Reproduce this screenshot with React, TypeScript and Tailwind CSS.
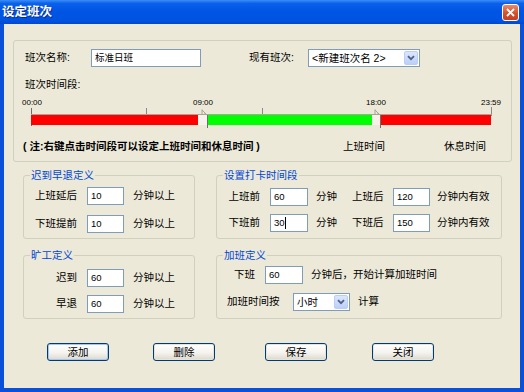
import React from 'react';

type TextBoxProps = { value: string; w: string; caret?: boolean };

function TextBox({ value, w, caret = false }: TextBoxProps) {
  return (
    <div className={`${w} h-[18px] shrink-0 flex items-center bg-white border border-[#7F9DB9] pl-[3px] text-[9.5px] leading-none`}>
      <span>{value}</span>
      {caret && <span className="w-px h-[12px] bg-black" />}
    </div>
  );
}

function Combo({ value, w }: { value: string; w: string }) {
  return (
    <div className={`${w} h-[18px] shrink-0 flex items-center justify-between bg-white border border-[#7F9DB9] pl-[3px] pr-px`}>
      <span className="leading-none">{value}</span>
      <div className="w-[14px] h-[14px] rounded-[2px] border border-[#B9CDF6] bg-[linear-gradient(180deg,#DCE6FD,#BCCFF8)] flex items-center justify-center">
        <svg width="8" height="6" viewBox="0 0 8 6">
          <path d="M1 1.2 L4 4.2 L7 1.2" fill="none" stroke="#4D6185" strokeWidth="1.8" />
        </svg>
      </div>
    </div>
  );
}

function GroupBox({ title, className, children }: { title: string; className: string; children: React.ReactNode }) {
  return (
    <div className={`relative shrink-0 border border-[#D0D0BF] rounded-[3px] ${className}`}>
      <span className="absolute -top-[8px] left-[6px] px-px bg-[#ECE9D8] text-[#0046D5] leading-[14px]">{title}</span>
      {children}
    </div>
  );
}

function XpButton({ label, className, primary = false }: { label: string; className: string; primary?: boolean }) {
  return (
    <button
      className={`w-[62px] h-[18px] shrink-0 rounded-[3px] border border-[#003C74] bg-[linear-gradient(180deg,#FFFFFF_0%,#F4F3EE_55%,#DCD8CC_100%)] leading-none ${
        primary ? 'shadow-[inset_0_0_0_1px_#A8C4F0]' : 'shadow-[inset_0_0_0_1px_#E6E4DA]'
      } ${className}`}
    >
      {label}
    </button>
  );
}

// small drag handle drawn at a segment boundary
function Handle({ left }: { left: string }) {
  return (
    <svg className={`absolute top-[11px] ${left}`} width="7" height="8" viewBox="0 0 7 8">
      <path d="M1 0.5 L1 6 M1 1 L5 5 L3 5" fill="none" stroke="#A8A496" strokeWidth="1" />
    </svg>
  );
}

function Timeline() {
  return (
    <div className="relative h-[30px] mt-[7px] text-[8px] leading-[10px]">
      {/* labels */}
      <span className="absolute top-0 left-[18px] -translate-x-1/2">00:00</span>
      <span className="absolute top-0 left-[189px] -translate-x-1/2">09:00</span>
      <span className="absolute top-0 left-[362px] -translate-x-1/2">18:00</span>
      <span className="absolute top-0 left-[477px] -translate-x-1/2">23:59</span>

      {/* ticks */}
      <div className="absolute left-[17px] top-[10px] w-px h-[18px] bg-[#6E6E6E]" />
      <div className="absolute left-[132px] top-[10px] w-px h-[6px] bg-[#8A8A8A]" />
      <div className="absolute left-[248px] top-[10px] w-px h-[6px] bg-[#8A8A8A]" />
      <div className="absolute left-[477px] top-[9px] w-px h-[9px] bg-[#8A8A8A]" />

      {/* track */}
      <div className="absolute left-[17px] top-[16px] w-[461px] h-px bg-[#A9A596]" />
      <div className="absolute left-[17px] top-[17px] w-[167px] h-[10px] bg-[#FF0000]" />
      <div className="absolute left-[184px] top-[17px] w-[10px] h-[10px] bg-[#F4F2EA]" />
      <div className="absolute left-[194px] top-[17px] w-[164px] h-[10px] bg-[#00FF00]" />
      <div className="absolute left-[358px] top-[17px] w-[9px] h-[10px] bg-[#F4F2EA]" />
      <div className="absolute left-[367px] top-[17px] w-[110px] h-[10px] bg-[#FF0000]" />

      {/* handles */}
      <Handle left="left-[187px]" />
      <div className="absolute left-[193px] top-[17px] w-px h-[13px] bg-[#6E6E6E]" />
      <Handle left="left-[360px]" />
      <div className="absolute left-[366px] top-[17px] w-px h-[13px] bg-[#6E6E6E]" />
    </div>
  );
}

export default function App() {
  return (
    <div className="w-[524px] h-[392px] flex flex-col font-['Liberation_Sans','Noto_Sans_CJK_SC',sans-serif] text-[10.5px] text-black select-none">
      {/* Title bar */}
      <div className="h-[24px] shrink-0 flex items-center bg-[linear-gradient(180deg,#3C8DF6_0%,#0A61E9_14%,#0055E5_45%,#0053E0_85%,#0048CF_100%)]">
        <span className="pl-[2px] text-white font-bold text-[12.5px] leading-none [text-shadow:1px_1px_0_#0A2A8A]">设定班次</span>
        <div className="ml-auto mr-[5px] w-[17px] h-[17px] rounded-[3px] border border-white bg-[linear-gradient(180deg,#E88A6B,#D4512E_55%,#C44020)] flex items-center justify-center">
          <svg width="9" height="9" viewBox="0 0 9 9">
            <path d="M1 1 L8 8 M8 1 L1 8" stroke="white" strokeWidth="1.8" />
          </svg>
        </div>
      </div>

      {/* Body */}
      <div className="flex-1 flex flex-col bg-[#ECE9D8] border-x-4 border-b-4 border-[#0A50D8]">
        {/* Shift panel */}
        <div className="ml-[9px] mt-[16px] w-[499px] h-[122px] shrink-0 flex flex-col border border-[#D0D0BF] rounded-[3px]">
          <div className="flex items-center h-[18px] mt-[8px] pl-[11px]">
            <span className="w-[66px] shrink-0">班次名称:</span>
            <TextBox value="标准日班" w="w-[110px]" />
            <span className="ml-[48px] w-[59px] shrink-0">现有班次:</span>
            <Combo value="<新建班次名 2>" w="w-[112px]" />
          </div>
          <div className="mt-[10px] pl-[11px] leading-[14px]">班次时间段:</div>
          <Timeline />
          <div className="flex items-center mt-[11px] leading-[14px]">
            <span className="pl-[9px] w-[329px] shrink-0 font-bold">( 注:右键点击时间段可以设定上班时间和休息时间 )</span>
            <span className="w-[101px] shrink-0">上班时间</span>
            <span>休息时间</span>
          </div>
        </div>

        {/* Row 1 of group boxes */}
        <div className="flex gap-[21px] ml-[19px] mt-[13px]">
          <GroupBox title="迟到早退定义" className="w-[172px] h-[64px]">
            <div className="flex items-center h-[18px] mt-[11px]">
              <span className="w-[63px] pr-[10px] text-right shrink-0">上班延后</span>
              <TextBox value="10" w="w-[37px]" />
              <span className="ml-[9px]">分钟以上</span>
            </div>
            <div className="flex items-center h-[18px] mt-[10px]">
              <span className="w-[63px] pr-[10px] text-right shrink-0">下班提前</span>
              <TextBox value="10" w="w-[37px]" />
              <span className="ml-[9px]">分钟以上</span>
            </div>
          </GroupBox>

          <GroupBox title="设置打卡时间段" className="w-[286px] h-[64px]">
            <div className="flex items-center h-[18px] mt-[12px]">
              <span className="w-[53px] pr-[10px] text-right shrink-0">上班前</span>
              <TextBox value="60" w="w-[38px]" />
              <span className="ml-[8px] w-[36px] shrink-0">分钟</span>
              <span className="w-[41px] shrink-0">上班后</span>
              <TextBox value="120" w="w-[37px]" />
              <span className="ml-[7px]">分钟内有效</span>
            </div>
            <div className="flex items-center h-[18px] mt-[8px]">
              <span className="w-[53px] pr-[10px] text-right shrink-0">下班前</span>
              <TextBox value="30" w="w-[38px]" caret />
              <span className="ml-[8px] w-[36px] shrink-0">分钟</span>
              <span className="w-[41px] shrink-0">下班后</span>
              <TextBox value="150" w="w-[37px]" />
              <span className="ml-[7px]">分钟内有效</span>
            </div>
          </GroupBox>
        </div>

        {/* Row 2 of group boxes */}
        <div className="flex gap-[21px] ml-[19px] mt-[16px]">
          <GroupBox title="旷工定义" className="w-[172px] h-[64px]">
            <div className="flex items-center h-[18px] mt-[13px]">
              <span className="w-[63px] pr-[10px] text-right shrink-0">迟到</span>
              <TextBox value="60" w="w-[37px]" />
              <span className="ml-[9px]">分钟以上</span>
            </div>
            <div className="flex items-center h-[18px] mt-[8px]">
              <span className="w-[63px] pr-[10px] text-right shrink-0">早退</span>
              <TextBox value="60" w="w-[37px]" />
              <span className="ml-[9px]">分钟以上</span>
            </div>
          </GroupBox>

          <GroupBox title="加班定义" className="w-[286px] h-[64px]">
            <div className="flex items-center h-[18px] mt-[10px]">
              <span className="w-[48px] pr-[10px] text-right shrink-0">下班</span>
              <TextBox value="60" w="w-[38px]" />
              <span className="ml-[8px]">分钟后，开始计算加班时间</span>
            </div>
            <div className="flex items-center h-[18px] mt-[9px] pl-[10px]">
              <span className="w-[66px] shrink-0">加班时间按</span>
              <Combo value="小时" w="w-[57px]" />
              <span className="ml-[8px]">计算</span>
            </div>
          </GroupBox>
        </div>

        {/* Buttons */}
        <div className="flex mt-[24px]">
          <XpButton label="添加" className="ml-[43px]" primary />
          <XpButton label="删除" className="ml-[44px]" />
          <XpButton label="保存" className="ml-[50px]" />
          <XpButton label="关闭" className="ml-[45px]" />
        </div>
      </div>
    </div>
  );
}
